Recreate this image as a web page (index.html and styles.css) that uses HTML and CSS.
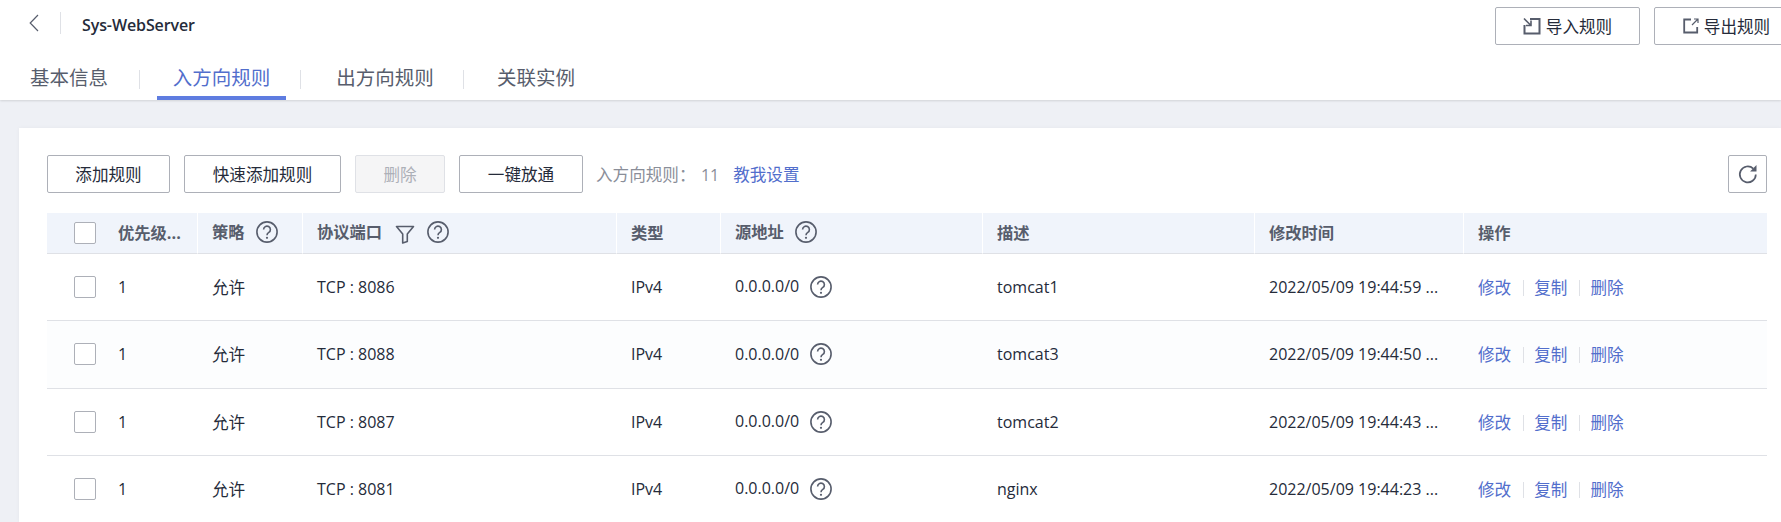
FILE: index.html
```html
<!DOCTYPE html>
<html lang="zh-CN">
<head>
<meta charset="utf-8">
<title>Sys-WebServer</title>
<link rel="stylesheet" href="styles.css">
</head>
<body>
<svg class="defs" width="0" height="0" aria-hidden="true">
  <symbol id="help" viewBox="0 0 22 22">
    <circle cx="11" cy="11" r="10.100" fill="none" stroke="currentColor" stroke-width="1.600"/>
    <path d="M7.600 8.500a3.400 3.400 0 1 1 5.200 2.900c-1.200.7-1.800 1.300-1.800 2.900" fill="none" stroke="currentColor" stroke-width="1.600"/>
    <circle cx="11" cy="16.800" r="1.100" fill="currentColor"/>
  </symbol>
</svg>
<header class="top">
  <div class="title-row">
    <div class="title-left">
      <svg class="back" width="10" height="18" viewBox="0 0 10 18"><path d="M9 1 1.200 9 9 17" fill="none" stroke="#575d6c" stroke-width="1.200"/></svg>
      <span class="vline"></span>
      <span class="title">Sys-WebServer</span>
    </div>
    <div class="top-actions">
      <button class="btn btn-top">
        <svg width="18" height="18" viewBox="0 0 18 18"><path d="M7 2h9.500v14.500H1.500V8" fill="none" stroke="#575d6c" stroke-width="2"/><path d="M1 1.500 7.500 8M8 3.500V8.500H3" fill="none" stroke="#575d6c" stroke-width="1.600"/></svg>
        <span>导入规则</span>
      </button>
      <button class="btn btn-top">
        <svg width="16" height="16" viewBox="0 0 16 16"><path d="M8 1.500H1.200v13h13V9" fill="none" stroke="#575d6c" stroke-width="1.800"/><path d="M9 7 15 1M11 1h4v4" fill="none" stroke="#575d6c" stroke-width="1.200"/></svg>
        <span>导出规则</span>
      </button>
    </div>
  </div>
  <nav class="tabs">
    <a class="tab tab-first">基本信息</a>
    <a class="tab tab-active">入方向规则</a>
    <a class="tab tab-third">出方向规则</a>
    <a class="tab tab-last">关联实例</a>
  </nav>
</header>
<main class="content">
  <section class="card">
    <div class="toolbar">
      <button class="btn btn-a">添加规则</button>
      <button class="btn btn-b">快速添加规则</button>
      <button class="btn btn-c" disabled>删除</button>
      <button class="btn btn-d">一键放通</button>
      <span class="count">入方向规则： <span class="num">11</span></span>
      <a class="teach">教我设置</a>
      <button class="btn refresh" aria-label="刷新">
        <svg width="22" height="22" viewBox="0 0 22 22"><path d="M18.800 11.500a8 8 0 1 1-2.500-5.900" fill="none" stroke="#575d6c" stroke-width="1.700"/><path d="M19.500 2v6.400h-6.400z" fill="#575d6c"/></svg>
      </button>
    </div>
    <table class="rules">
      <colgroup>
        <col class="c1"><col class="c2"><col class="c3"><col class="c4"><col class="c5"><col class="c6"><col class="c7"><col class="c8"><col class="c9">
      </colgroup>
      <thead>
        <tr>
          <th class="check"><span class="box"></span></th>
          <th>优先级...</th>
          <th>策略<svg class="help"><use href="#help"/></svg></th>
          <th>协议端口<svg class="filter" width="20" height="20" viewBox="0 0 20 20"><path d="M1.500 2.500h17L12.300 10v7.500l-4.600 1.500V10z" fill="none" stroke="#575d6c" stroke-width="1.600" stroke-linejoin="round"/></svg><svg class="help help-after"><use href="#help"/></svg></th>
          <th>类型</th>
          <th>源地址<svg class="help"><use href="#help"/></svg></th>
          <th>描述</th>
          <th>修改时间</th>
          <th>操作</th>
        </tr>
      </thead>
      <tbody>
        <tr>
          <td class="check"><span class="box"></span></td><td>1</td><td class="cjk">允许</td><td>TCP : 8086</td><td>IPv4</td>
          <td>0.0.0.0/0<svg class="help"><use href="#help"/></svg></td><td>tomcat1</td><td>2022/05/09 19:44:59 ...</td>
          <td class="ops"><a>修改</a><i></i><a>复制</a><i></i><a>删除</a></td>
        </tr>
        <tr>
          <td class="check"><span class="box"></span></td><td>1</td><td class="cjk">允许</td><td>TCP : 8088</td><td>IPv4</td>
          <td>0.0.0.0/0<svg class="help"><use href="#help"/></svg></td><td>tomcat3</td><td>2022/05/09 19:44:50 ...</td>
          <td class="ops"><a>修改</a><i></i><a>复制</a><i></i><a>删除</a></td>
        </tr>
        <tr>
          <td class="check"><span class="box"></span></td><td>1</td><td class="cjk">允许</td><td>TCP : 8087</td><td>IPv4</td>
          <td>0.0.0.0/0<svg class="help"><use href="#help"/></svg></td><td>tomcat2</td><td>2022/05/09 19:44:43 ...</td>
          <td class="ops"><a>修改</a><i></i><a>复制</a><i></i><a>删除</a></td>
        </tr>
        <tr>
          <td class="check"><span class="box"></span></td><td>1</td><td class="cjk">允许</td><td>TCP : 8081</td><td>IPv4</td>
          <td>0.0.0.0/0<svg class="help"><use href="#help"/></svg></td><td>nginx</td><td>2022/05/09 19:44:23 ...</td>
          <td class="ops"><a>修改</a><i></i><a>复制</a><i></i><a>删除</a></td>
        </tr>
      </tbody>
    </table>
  </section>
</main>
</body>
</html>
```
FILE: styles.css
```css
* { box-sizing: border-box; }
html, body { margin: 0; height: 522px; overflow: hidden; }
body {
  width: 1781px;
  background: #eef0f5;
  color: #252b3a;
  font-family: "Open Sans", "Noto Sans CJK SC", sans-serif;
  font-size: 16px;
}
.defs { display: block; height: 0; }

.top {
  height: 100px;
  background: #fff;
  box-shadow: 0 1px 2px rgba(0, 0, 0, .12);
  position: relative;
  overflow: hidden;
}
.title-row { display: flex; justify-content: space-between; padding-top: 7px; height: 58px; }
.title-left { display: flex; align-items: flex-start; padding: 5px 0 0 29px; }
.back { margin-top: 2px; }
.vline { width: 1px; height: 22px; background: #dfe1e6; margin: 0 21px 0 21px; }
.title { font-size: 16px; font-weight: 600; line-height: 26px; letter-spacing: -.1px; }
.top-actions { display: flex; gap: 14px; flex: none; margin-right: -18px; }

.btn {
  height: 38px;
  border: 1px solid #adb0b8;
  border-radius: 2px;
  background: #fff;
  color: #252b3a;
  font: inherit;
  font-size: 16.600px;
  padding: 0;
  display: inline-flex;
  align-items: center;
  justify-content: center;
}
.btn-top { width: 145px; gap: 5px; }

.tabs { display: flex; height: 42px; position: relative; }
.tab {
  font-size: 19.500px;
  line-height: 30px;
  color: #575d6c;
  height: 42px;
  padding-top: 5px;
  position: relative;
  text-align: center;
  white-space: nowrap;
}
.tab-first { margin-left: 30px; width: 78px; }
.tab-active { margin-left: 49px; width: 129px; color: #526ecc; border-bottom: 4px solid #5e7ce0; }
.tab-third { margin-left: 50px; width: 98px; }
.tab-last { margin-left: 63px; width: 78px; }
.tab-first::after, .tab-third::after, .tab-active::after {
  content: "";
  position: absolute;
  top: 12px;
  width: 1px;
  height: 19px;
  background: #dfe1e6;
}
.tab-first::after { right: -32px; }
.tab-active::after { right: -15px; }
.tab-third::after { right: -30px; }

.content { padding: 28px 0 0 19px; }
.card { background: #fff; height: 394px; padding: 27px 14px 0 28px; box-shadow: 0 0 4px rgba(0, 0, 0, .04); }

.toolbar { display: flex; align-items: center; height: 38px; }
.btn-a { width: 123px; }
.btn-b { width: 157px; margin-left: 14px; }
.btn-c { width: 90px; margin-left: 14px; background: #f5f5f6; border-color: #dfe1e6; color: #adb0b8; }
.btn-d { width: 124px; margin-left: 14px; }
.count { margin-left: 13px; color: #8a8e99; white-space: pre; font-size: 16.600px; }
.num { margin-left: 1px; font-size: 16px; }
.teach { margin-left: 14px; color: #526ecc; font-size: 16.600px; }
.refresh { width: 39px; margin-left: auto; }

.rules {
  table-layout: fixed;
  border-collapse: separate;
  border-spacing: 0;
  width: 1720px;
  margin-top: 20px;
}
.c1 { width: 57px; } .c2 { width: 93px; } .c3 { width: 105px; } .c4 { width: 314px; }
.c5 { width: 104px; } .c6 { width: 262px; } .c7 { width: 272px; } .c8 { width: 209px; } .c9 { width: 304px; }

.rules th {
  height: 41px;
  background: #f0f4fb;
  color: #575d6c;
  font-weight: 700;
  font-size: 16.300px;
  text-align: left;
  padding: 0 0 2px 14px;
  border-bottom: 1px solid #dfe1e6;
  border-left: 1px solid #fff;
  white-space: nowrap;
}
.rules th:first-child, .rules th:nth-child(2) { border-left: 0; }
.rules th svg, .rules td svg { vertical-align: middle; }
.rules td {
  height: 67.330px;
  padding: 0 0 0 15px;
  border-bottom: 1px solid #dfe1e6;
  white-space: nowrap;
}
.rules tbody tr:nth-child(2) td { background: #fcfdfe; }
.rules th.check, .rules td.check { padding: 0 0 0 27px; }
.rules td:nth-child(2) { padding-left: 14px; }
.rules .cjk { font-size: 16.600px; }
.box {
  display: block;
  width: 22px;
  height: 22px;
  border: 1px solid #adb0b8;
  border-radius: 2px;
  background: #fff;
}
.help { width: 22px; height: 22px; color: #575d6c; margin-left: 11px; position: relative; top: -1px; }
th .help { top: -2px; }
.filter { margin-left: 13px; }
.help-after { margin-left: 12px; }
.ops a { color: #526ecc; font-size: 16.600px; }
.ops i {
  display: inline-block;
  width: 1px;
  height: 16px;
  background: #dfe1e6;
  margin: 0 10.500px 0 11.500px;
  vertical-align: -2px;
}
```
